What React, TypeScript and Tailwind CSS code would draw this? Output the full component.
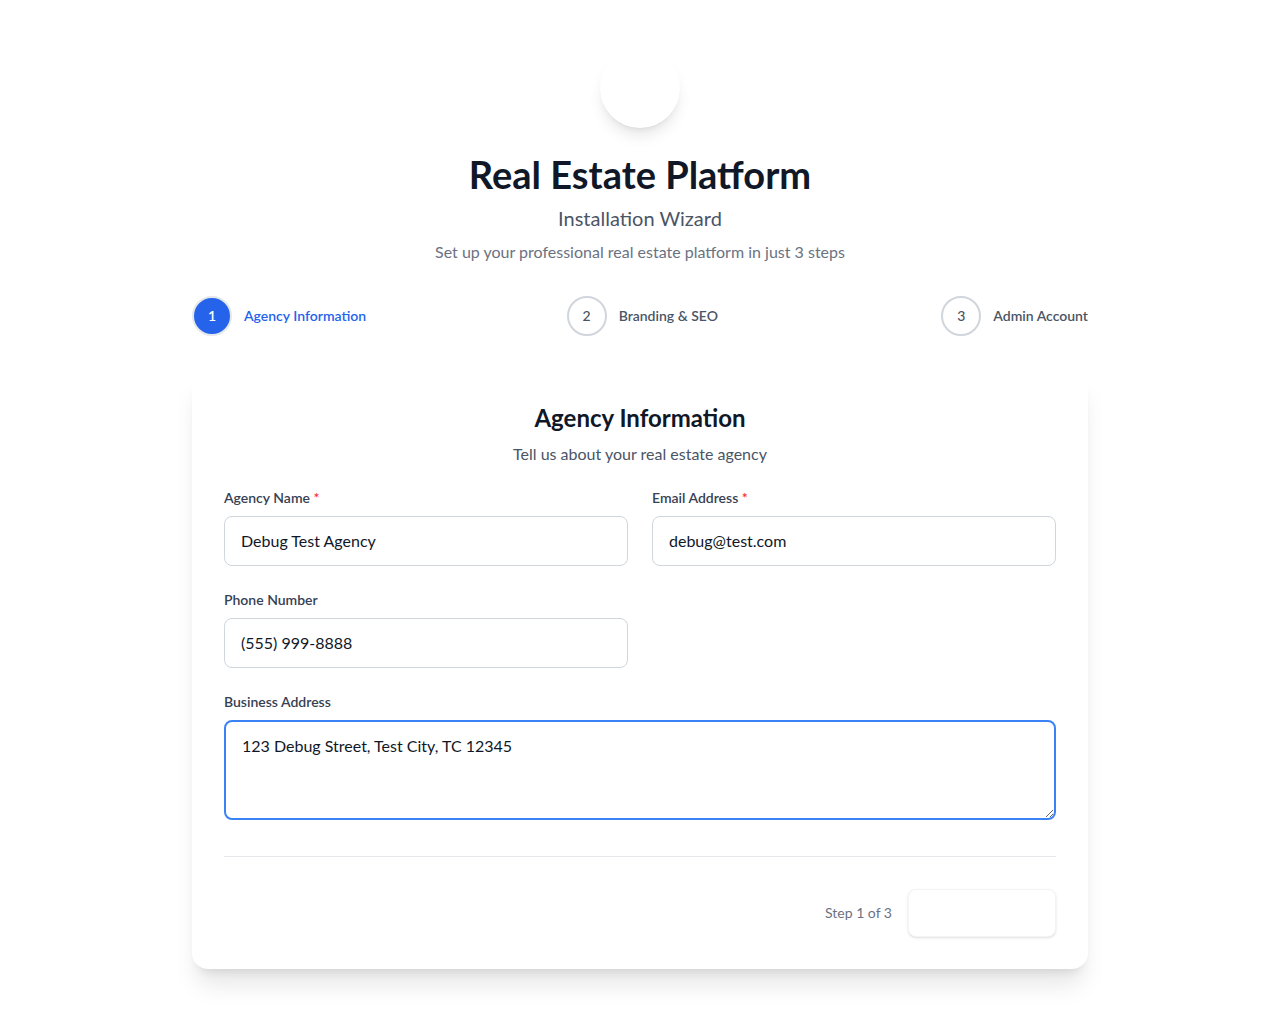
import React, { useState } from 'react';

const steps = [
  { id: 1, label: 'Agency Information' },
  { id: 2, label: 'Branding & SEO' },
  { id: 3, label: 'Admin Account' },
];

const App: React.FC = () => {
  const [form, setForm] = useState({
    name: 'Debug Test Agency',
    email: 'debug@test.com',
    phone: '(555) 999-8888',
    address: '123 Debug Street, Test City, TC 12345',
  });
  const current = 1;

  const update = (key: keyof typeof form) => (e: React.ChangeEvent<HTMLInputElement | HTMLTextAreaElement>) =>
    setForm({ ...form, [key]: e.target.value });

  return (
    <div
      className="min-h-screen bg-white py-12 pl-[15px]"
      style={{ fontFamily: 'Lato, "Noto Sans", sans-serif' }}
    >
      <div className="max-w-4xl mx-auto">
        {/* Header */}
        <div className="text-center mb-8">
          <div className="mx-auto mb-[26px] h-20 w-20 rounded-full bg-white shadow-lg"></div>
          <h1 className="text-[38px] leading-10 font-bold text-gray-900">Real Estate Platform</h1>
          <p className="mt-[10px] text-xl text-gray-600">Installation Wizard</p>
          <p className="mt-2 text-base text-gray-500">Set up your professional real estate platform in just 3 steps</p>
        </div>

        {/* Steps */}
        <div className="flex items-center mb-[34px]">
          {steps.map((step, i) => {
            const active = step.id === current;
            return (
              <div key={step.id} className={`flex items-center ${i < steps.length - 1 ? 'flex-1' : ''}`}>
                <div
                  className={
                    active
                      ? 'h-10 w-10 rounded-full bg-[#2563eb] border-2 border-gray-200 flex items-center justify-center text-sm font-semibold text-white'
                      : 'h-10 w-10 rounded-full bg-white border-2 border-gray-300 flex items-center justify-center text-sm font-medium text-gray-600'
                  }
                >
                  {step.id}
                </div>
                <span className={`ml-3 text-sm font-semibold ${active ? 'text-[#2563eb]' : 'text-gray-600'}`}>
                  {step.label}
                </span>
              </div>
            );
          })}
        </div>

        {/* Card */}
        <div className="bg-white rounded-2xl shadow-xl p-8">
          <div className="text-center mb-[22px]">
            <h2 className="text-2xl font-bold text-gray-900">Agency Information</h2>
            <p className="mt-2 text-gray-600">Tell us about your real estate agency</p>
          </div>

          <div className="grid grid-cols-2 gap-6">
            <div>
              <label className="block text-sm font-semibold text-gray-700 mb-2">
                Agency Name <span className="text-red-500">*</span>
              </label>
              <input
                value={form.name}
                onChange={update('name')}
                className="w-full px-4 py-3 border border-gray-300 rounded-lg text-gray-900 outline-none"
              />
            </div>
            <div>
              <label className="block text-sm font-semibold text-gray-700 mb-2">
                Email Address <span className="text-red-500">*</span>
              </label>
              <input
                value={form.email}
                onChange={update('email')}
                className="w-full px-4 py-3 border border-gray-300 rounded-lg text-gray-900 outline-none"
              />
            </div>
            <div>
              <label className="block text-sm font-semibold text-gray-700 mb-2">Phone Number</label>
              <input
                value={form.phone}
                onChange={update('phone')}
                className="w-full px-4 py-3 border border-gray-300 rounded-lg text-gray-900 outline-none"
              />
            </div>
            <div></div>
            <div className="col-span-2">
              <label className="block text-sm font-semibold text-gray-700 mb-2">Business Address</label>
              <textarea
                rows={3}
                value={form.address}
                onChange={update('address')}
                className="w-full px-4 py-3 border-2 border-[#3b82f6] rounded-lg text-gray-900 outline-none"
              />
            </div>
          </div>

          {/* Footer */}
          <div className="mt-[30px] pt-8 border-t border-gray-200 flex items-center justify-between">
            <div></div>
            <div className="flex items-center gap-4">
              <span className="text-sm text-gray-500">Step 1 of 3</span>
              <button className="w-[148px] h-12 rounded-lg bg-white border border-gray-100 shadow-sm"></button>
            </div>
          </div>
        </div>
      </div>
    </div>
  );
};

export default App;
